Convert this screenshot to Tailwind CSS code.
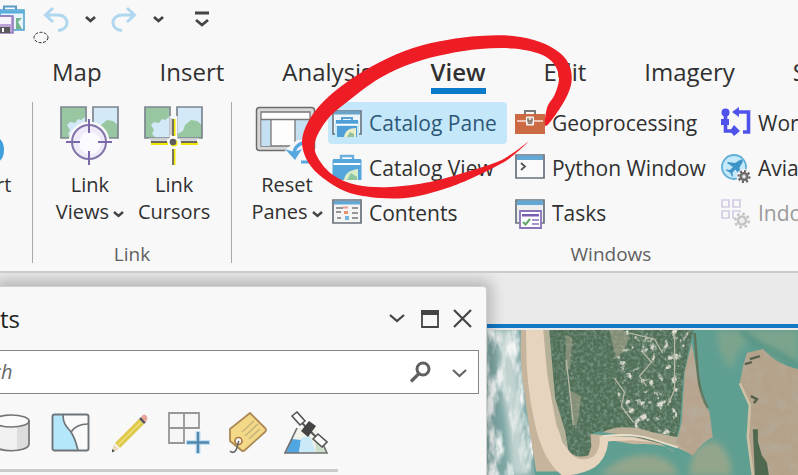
<!DOCTYPE html>
<html lang="en">
<head>
<meta charset="utf-8">
<meta name="viewport" content="width=device-width, initial-scale=1">
<title>Ribbon – View tab</title>
<script src="https://cdn.jsdelivr.net/npm/@tailwindcss/browser@4"></script>
</head>
<body class="relative flex h-screen flex-col overflow-hidden bg-[#f8f8f8] font-['Open_Sans','Noto_Sans',sans-serif] text-[#303030]">

<!-- Quick access toolbar -->
<header class="flex h-[55px] shrink-0 items-start pt-1">
  <button aria-label="Save project" class="shrink-0">
    <svg class="h-8 w-[25px]" viewBox="0 0 25 32" fill="none">
      <path d="M4 6V2.500h12V6" stroke="#5a9cc4" stroke-width="2"/>
      <path d="M0 6h24v20H10V12H0z" fill="#e6f3fa" stroke="#4a9fd0" stroke-width="1.500"/>
      <path d="M0 7h24v2.500H0z" fill="#5aaedc"/>
      <path d="M16 14h6l-4 4 4 7h-6z" fill="#74b48c"/>
      <path d="M-4 12h17v17H-4z" fill="#b9a6d6" stroke="#9277bd" stroke-width="1.500"/>
      <path d="M-2 13h13v7H-2z" fill="#f7f4fb"/>
      <path d="M0 23h10v6H0z" fill="#5a5a5a"/><path d="M2 24h2v4H2z" fill="#fff"/>
    </svg>
  </button>
  <button aria-label="Undo" class="ml-[18px] shrink-0">
    <svg class="h-8 w-[26px]" viewBox="0 0 26 32" fill="none" stroke="#b0d7ef" stroke-width="3"><path d="M10 4 2.500 11 10 18M3 11h12c5 0 9 3 9 7.500S20 26 15 26.500"/></svg>
  </button>
  <button aria-label="Undo list" class="ml-4 shrink-0">
    <svg class="h-8 w-3" viewBox="0 0 12 32" fill="none" stroke="#444" stroke-width="2.800"><path d="m1 13 4.500 4L10 13"/></svg>
  </button>
  <button aria-label="Redo" class="ml-[14px] shrink-0">
    <svg class="h-8 w-[26px]" viewBox="0 0 26 32" fill="none" stroke="#b0d7ef" stroke-width="3"><path d="m16 4 7.500 7L16 18M23 11H11c-5 0-9 3-9 7.500S6 26 11 26.500"/></svg>
  </button>
  <button aria-label="Redo list" class="ml-4 shrink-0">
    <svg class="h-8 w-3" viewBox="0 0 12 32" fill="none" stroke="#444" stroke-width="2.800"><path d="m1 13 4.500 4L10 13"/></svg>
  </button>
  <button aria-label="Customize toolbar" class="ml-[29px] shrink-0">
    <svg class="h-8 w-4" viewBox="0 0 16 32" fill="none" stroke="#444" stroke-width="2.800"><path d="M1 9h14M2 16l6 5 6-5"/></svg>
  </button>
</header>

<!-- Ribbon tabs -->
<nav class="flex shrink-0 gap-[58px] overflow-hidden whitespace-nowrap pl-[52px] text-[24px] leading-[33px]">
  <a href="#" class="border-b-[6px] border-transparent">Map</a>
  <a href="#" class="border-b-[6px] border-transparent">Insert</a>
  <a href="#" class="border-b-[6px] border-transparent">Analysis</a>
  <a href="#" aria-current="page" class="border-b-[6px] border-[#0a7acb] font-semibold">View</a>
  <a href="#" class="border-b-[6px] border-transparent">Edit</a>
  <a href="#" class="border-b-[6px] border-transparent">Imagery</a>
  <a href="#" class="border-b-[6px] border-transparent">Share</a>
</nav>

<!-- Ribbon -->
<main class="flex min-h-0 flex-1 flex-col">
<section aria-label="View ribbon" class="flex h-[179px] shrink-0 items-start overflow-hidden whitespace-nowrap border-b-2 border-[#cacbcb] pt-2">
  <div class="h-[161px] w-[33px] shrink-0 border-r border-[#a9a9a9]">
    <button class="-ml-1 flex flex-col items-start gap-[5px] pt-1 text-[20px] leading-[27px]">
      <svg class="h-[60px] w-3" viewBox="0 0 12 60"><path d="M0 31c5 1 8 6 8 13S5 55 0 57z" fill="#3fa0dc"/></svg>
      <span>rt</span>
    </button>
  </div>

  <div class="flex h-[161px] w-[199px] shrink-0 flex-col border-r border-[#a9a9a9]">
    <div class="flex h-[140px] shrink-0 items-start justify-center gap-[14px] pl-[2px]">
      <button class="flex flex-col items-center gap-[5px] pt-1 text-[20px] leading-[27px]">
        <svg class="h-[60px] w-[60px]" viewBox="0 0 60 60" fill="none">
          <path d="M1 1h25v31H1zM33 1h25v31H33z" fill="#d3e9f7"/>
          <path d="M1 1h24v10l-4 3-3-1-3 4-5-1-3 3 3 5-2 4 4 4H1zM33 32V28l6-3 2-6 6-5 6 1 5 4v13z" fill="#98c6a0"/>
          <path d="M1 1h25v31H1zM33 1h25v31H33z" stroke="#7c8590" stroke-width="1.700"/>
          <circle cx="29" cy="36" r="20.500" fill="#f8f8f8"/>
          <circle cx="29" cy="36" r="17" fill="#efebf8" stroke="#8274a8" stroke-width="2"/>
          <circle cx="30" cy="37" r="11" fill="#fbfaff"/>
          <path d="M29 13v14M29 45v14M6 36h14M38 36h14" stroke="#7a68ab" stroke-width="2"/>
        </svg>
        <span>Link<br>Views<svg class="ml-1 inline h-3 w-[11px]" viewBox="0 0 11 12" fill="none" stroke="#444" stroke-width="2.400"><path d="m1 4 4.500 4L10 4"/></svg></span>
      </button>
      <button class="flex flex-col items-center gap-[5px] pt-1 text-[20px] leading-[27px]">
        <svg class="h-[60px] w-[60px]" viewBox="0 0 60 60" fill="none">
          <path d="M1 1h25v31H1zM33 1h25v31H33z" fill="#d3e9f7"/>
          <path d="M1 1h24v10l-4 3-3-1-3 4-5-1-3 3 3 5-2 4 4 4H1zM33 32V28l6-3 2-6 6-5 6 1 5 4v13z" fill="#98c6a0"/>
          <path d="M1 1h25v31H1zM33 1h25v31H33z" stroke="#7c8590" stroke-width="1.700"/>
          <path d="M29.500 10v50M5 36.500h50" stroke="#f8f8f8" stroke-width="8"/>
          <path d="M27 12v17M6 33.500h17M36 33.500h17" stroke="#cfcfcf" stroke-width="2.500"/>
          <path d="M30 13v17M30 43v16M7 37.500h17M37 37.500h17" stroke="#f2e600" stroke-width="3"/>
          <path d="M29 13v17M29 43v16M7 36h16M37 36h16" stroke="#6a6a60" stroke-width="1.800"/>
          <circle cx="30" cy="37" r="3.500" fill="#f2e600"/><circle cx="29" cy="36" r="3.300" fill="#5c5c5c"/>
        </svg>
        <span>Link<br>Cursors</span>
      </button>
    </div>
    <p class="text-center text-[19px] leading-6 text-[#606060]">Link</p>
  </div>

  <div class="flex w-[758px] shrink-0 flex-col">
    <div class="flex h-[140px] shrink-0 items-start pl-[18px]">
      <button class="flex w-[74px] flex-col items-center gap-[5px] pt-1 text-[20px] leading-[27px]">
        <svg class="h-[60px] w-[64px]" viewBox="0 0 64 60" fill="none">
          <rect x="1.500" y="1.500" width="58" height="43" rx="3" fill="#d8d8d8" stroke="#6b6b6b" stroke-width="1.500"/>
          <path d="M6 6h49v34H6z" fill="#fdfdfd" stroke="#777" stroke-width="1.300"/>
          <path d="M6.500 14H16v26H6.500zM40 14h14.500v26H40z" fill="#c4dff1"/>
          <path d="M6 13.500h49M16 14v26M40 14v26" stroke="#777" stroke-width="1.300"/>
          <path d="M30 44c4 10 14 12 14 12s10-4 14-22H42z" fill="#f8f8f8"/>
          <path d="M39 48c0-7 6-12 15-12" stroke="#57a7e0" stroke-width="3.500"/><path d="m30 43 9 3 8-3-7 11z" fill="#57a7e0"/>
          <path d="M46 56h14" stroke="#57a7e0" stroke-width="3"/>
        </svg>
        <span>Reset<br>Panes<svg class="ml-1 inline h-3 w-[11px]" viewBox="0 0 11 12" fill="none" stroke="#444" stroke-width="2.400"><path d="m1 4 4.500 4L10 4"/></svg></span>
      </button>

      <div class="ml-1 flex w-[179px] flex-col gap-[3px] text-[21px]">
        <button class="flex h-[42px] items-center gap-[7px] rounded bg-[#c4e7fa] px-1 pt-[2px] text-[#2d5878]">
          <svg class="h-[30px] w-[30px] shrink-0" viewBox="0 0 30 30" fill="none">
            <path d="M1 2h28v23H1z" fill="#eef5fa" stroke="#68727c" stroke-width="1.600"/><path d="M1.800 2h26.400v3.500H1.800z" fill="#6aa3c8"/>
            <path d="M3 12h24v17H3z" fill="#c4e7fa"/>
            <path d="M10 12V9h10v3" stroke="#54a2d8" stroke-width="2"/>
            <path d="M4 11h22v4H4zM5 17h20v11H5z" fill="#4fa0d8"/><path d="M4 15.500h22" stroke="#fff" stroke-width="1.500"/>
            <path d="M12 28c1-6 5-9 12-9v9z" fill="#e9edc8"/><path d="M15 28l3-5 4 2v3z" fill="#94c19a"/>
          </svg>Catalog Pane
        </button>
        <button class="flex h-[42px] items-center gap-[7px] px-1 pt-[2px]">
          <svg class="h-[30px] w-[30px] shrink-0" viewBox="0 0 30 30" fill="none">
            <path d="M9 6V2h12v4" stroke="#6bb0dd" stroke-width="2.400"/>
            <path d="M1 5h28v4H1zM1 11h28v15H1z" fill="#55a6dc"/><path d="M1 6v20M29 6v20" stroke="#55a6dc"/><path d="M2 10h26" stroke="#fff" stroke-width="2"/>
            <path d="M12 26c1-7 6-10 14-11v11z" fill="#d9edc8"/><path d="m15 26 4-7 6 4v3z" fill="#8fc6a0"/>
          </svg>Catalog View
        </button>
        <button class="flex h-[42px] items-center gap-[7px] px-1 pt-[2px]">
          <svg class="h-[30px] w-[30px] shrink-0" viewBox="0 0 30 30" fill="none">
            <path d="M1 1h28v23H1z" fill="#f4f4f4" stroke="#68727c" stroke-width="1.700"/><path d="M2 2h26v3.500H2z" fill="#63a8d4"/>
            <path d="M4 9h7M4 13h5M5 19h4M20 9h6M20 14h6M20 19h6" stroke="#777" stroke-width="1.600"/>
            <path d="M11 8.500h5" stroke="#e9a090" stroke-width="2"/><path d="M12 12h4v3h-4z" fill="#e8916c"/><path d="M13 17h4v4h-4z" fill="#77b5dc"/>
          </svg>Contents
        </button>
      </div>

      <div class="ml-1 flex w-[202px] flex-col gap-[3px] text-[21px]">
        <button class="flex h-[42px] items-center gap-[7px] px-1 pt-[2px]">
          <svg class="h-[30px] w-[30px] shrink-0" viewBox="0 0 30 30" fill="none">
            <path d="M10 6V2h10v4" stroke="#7b7b7b" stroke-width="2"/><path d="M0 5h30v20H0z" fill="#cc6a43"/>
            <path d="M2 12h26" stroke="#f8ddd0" stroke-width="1.600"/><path d="M11.500 8h7v8h-7z" fill="#e8d5cb" stroke="#fff"/><path d="M13 9v3h4V9M13 14h4" stroke="#7b6a62" stroke-width="1.300"/>
          </svg>Geoprocessing
        </button>
        <button class="flex h-[42px] items-center gap-[7px] px-1 pt-[2px]">
          <svg class="h-[30px] w-[30px] shrink-0" viewBox="0 0 30 30" fill="none">
            <path d="M1 1h28v23H1z" fill="#fafafa" stroke="#68727c" stroke-width="1.700"/><path d="M2 1.500h26V6H2z" fill="#63a8d4"/><path d="m6 9 4 3.500L6 16" stroke="#555" stroke-width="1.800"/>
          </svg>Python Window
        </button>
        <button class="flex h-[42px] items-center gap-[7px] px-1 pt-[2px]">
          <svg class="h-[30px] w-[30px] shrink-0" viewBox="0 0 30 30" fill="none">
            <path d="M1 1h28v23H1z" fill="#eee" stroke="#68727c" stroke-width="1.700"/><path d="M2 1.500h26V6H2z" fill="#63a8d4"/>
            <path d="M5 12h21v17H5z" fill="#fcfbff" stroke="#8a74b8" stroke-width="1.800"/><path d="M7 15h17v2.500H7z" fill="#7a5fb0"/><path d="m8 23 2.500 2.500L15 20" stroke="#62a86a" stroke-width="2"/><path d="M17 21h7M17 25h7" stroke="#8a74b8" stroke-width="1.700"/>
          </svg>Tasks
        </button>
      </div>

      <div class="ml-1 flex flex-col gap-[3px] text-[21px]">
        <button class="flex h-[42px] items-center gap-[7px] px-1 pt-[2px]">
          <svg class="h-[30px] w-[30px] shrink-0 overflow-visible" viewBox="0 0 30 30" fill="none">
            <circle cx="4.500" cy="3.500" r="4" fill="#4f52ea"/><path d="M0 10h8v6H0z" fill="#4f52ea"/><path d="M4.500 3v19H14" stroke="#4f52ea" stroke-width="3.600"/><path d="m13 16 6 6-6 5-4-5z" fill="#4f52ea"/>
            <path d="M16 3h11.500v20H22" stroke="#4f52ea" stroke-width="3.600"/><path d="M18-2v10l-7-5z" fill="#4f52ea"/>
          </svg>Workflow Manager
        </button>
        <button class="flex h-[42px] items-center gap-[7px] px-1 pt-[2px]">
          <svg class="h-[30px] w-[30px] shrink-0" viewBox="0 0 30 30" fill="none">
            <circle cx="13" cy="13" r="12" fill="#c5e9f8" stroke="#5eb0d8" stroke-width="1.800"/>
            <path d="m19 6-5 3-7-1-1 1 6 4-3 3-4-.5v1l4 2 2 4h1l-.5-4 3-3 4 6 1-1-1-7 3-5q1-3-2-3z" fill="#3e94c6"/>
            <circle cx="23" cy="22.500" r="7.500" fill="#f8f8f8"/><circle cx="23" cy="22.500" r="5.500" stroke="#666" stroke-width="2.200" stroke-dasharray="2.200 2"/><circle cx="23" cy="22.500" r="3.500" fill="#aaa" stroke="#666" stroke-width="2"/><circle cx="23" cy="22.500" r="1.200" fill="#fff"/>
          </svg>Aviation Charting
        </button>
        <button disabled class="flex h-[42px] items-center gap-[7px] px-1 pt-[2px] text-[#9b9b9b]">
          <svg class="h-[30px] w-[30px] shrink-0" viewBox="0 0 30 30" fill="none">
            <path d="M1 1h7v7H1zM12 1h7v7h-7zM1 12h7v7H1zM12 12h7v7h-7z" stroke="#d3cce4" stroke-width="1.700"/>
            <circle cx="21" cy="21.500" r="8.500" fill="#f8f8f8"/><circle cx="21" cy="21.500" r="6.800" stroke="#c4c4c4" stroke-width="2.500" stroke-dasharray="2.700 2.640"/><circle cx="21" cy="21.500" r="4" fill="#eee" stroke="#c4c4c4" stroke-width="2.500"/>
          </svg>Indoors
        </button>
      </div>
    </div>
    <p class="text-center text-[19px] leading-6 text-[#606060]">Windows</p>
  </div>
</section>

<!-- Workspace -->
<div class="flex min-h-0 flex-1 items-stretch overflow-hidden bg-[#eaeaea]">
  <aside aria-label="Contents pane" class="relative mt-[13px] flex w-[487px] shrink-0 flex-col rounded-tr border-r border-t border-[#cfcfcf] bg-[#f8f8f8] shadow-[0_-1px_14px_5px_rgba(0,0,0,0.22)]">
    <div class="flex h-[63px] items-center pr-[14px]">
      <h2 class="flex-1 text-[24px] leading-8 text-[#222]">ts</h2>
      <button aria-label="Pane options"><svg class="h-5 w-4" viewBox="0 0 16 20" fill="none" stroke="#444" stroke-width="2.300"><path d="m1 6 7 6 7-6"/></svg></button>
      <button aria-label="Maximize" class="ml-4"><svg class="h-5 w-[18px]" viewBox="0 0 18 20" fill="none"><path d="M1 2h16v16H1z" stroke="#444" stroke-width="1.800"/><path d="M0 1h18v5H0z" fill="#444"/></svg></button>
      <button aria-label="Close" class="ml-[14px]"><svg class="h-5 w-[19px]" viewBox="0 0 19 20" fill="none" stroke="#444" stroke-width="2.200"><path d="m1 1 17 17M18 1 1 18"/></svg></button>
    </div>
    <div class="mr-[7px] flex h-11 shrink-0 items-center border-y border-r border-[#868686] bg-white pr-[11px]">
      <input type="text" aria-label="Search" placeholder="ch" class="-ml-2 min-w-0 flex-1 bg-transparent text-[20px] italic leading-7 outline-none placeholder:text-[#666]">
      <button aria-label="Run search"><svg class="h-6 w-[22px]" viewBox="0 0 22 24" fill="none" stroke="#606060"><circle cx="14" cy="9" r="6" stroke-width="3"/><path d="m10 13.500-8 8" stroke-width="3.200"/></svg></button>
      <button aria-label="Search options" class="ml-[21px]"><svg class="h-6 w-[15px]" viewBox="0 0 15 24" fill="none" stroke="#666" stroke-width="2.200"><path d="m1 10 6.500 6 6.500-6"/></svg></button>
    </div>
    <div class="mt-[17px] flex h-[45px] shrink-0 items-start">
      <button aria-label="List by data source"><svg class="h-[45px] w-[30px]" viewBox="0 0 30 45" fill="none"><path d="M-6 9v24c0 9 35 9 35 0V9z" fill="#f0f0f0"/><path d="M17 14v25c8-1 12-3 12-6V9z" fill="#dcdcdc"/><path d="M-6 9v24c0 9 35 9 35 0V9" stroke="#747474" stroke-width="1.700"/><ellipse cx="11.500" cy="10" rx="17.500" ry="6" fill="#fafafa" stroke="#747474" stroke-width="1.700"/></svg></button>
      <button aria-label="List by selection" class="ml-[21px]"><svg class="h-[45px] w-[39px]" viewBox="0 0 39 45" fill="none"><rect x="1.500" y="3.500" width="36" height="36" rx="2" fill="#fafafa"/><path d="M2 4h10c0 9 4 12 8 17 4 6 5 11 7 18H2z" fill="#b4e7fa"/><path d="M12 4c0 9 4 12 8 17 4 6 5 11 7 18M20 21c4-6 9-8 17-8" stroke="#6e7478" stroke-width="1.700"/><rect x="1.500" y="3.500" width="36" height="36" rx="2" stroke="#6e7478" stroke-width="1.900"/></svg></button>
      <button aria-label="List by editing" class="ml-[21px]"><svg class="h-[45px] w-[38px]" viewBox="0 0 38 45"><path d="m3 33 5 5-6 3-1-1z" fill="#eadbc0"/><path d="m1 38 3 2-3 1.500z" fill="#555"/><path d="M4 32 28 8l5 5L9 37z" fill="#dfc94d"/><path d="M7 34 31 10" stroke="#f0e07a" stroke-width="1.500"/><path d="m28 8 2-2 5 5-2 2z" fill="#565656"/><path d="m30 6 2-2c3-1 5 2 4 5l-2 2z" fill="#e8a398"/></svg></button>
      <button aria-label="List by snapping" class="ml-[18px]"><svg class="h-[45px] w-11" viewBox="0 0 44 45" fill="none"><path d="M2 2h30v15H2zM2 2h15v30H2z" fill="#f6f6f6" stroke="#969696" stroke-width="1.800"/><path d="M31 20v23M19 31.500h24" stroke="#bde0f5" stroke-width="5"/><path d="M31 21v21M20 31.500h22" stroke="#5587ad" stroke-width="2.400"/></svg></button>
      <button aria-label="List by labeling" class="ml-4"><svg class="h-[45px] w-10" viewBox="0 0 40 45" fill="none"><path d="M23 2 38 17Q40 19 38 21L18 39Q16 41 14 39L3 30V18z" fill="#f3d987" stroke="#ad8a55" stroke-width="1.800"/><path d="m15 21 12-11M18 25 31 13M22 28l11-10" stroke="#c6b67e" stroke-width="1.600"/><circle cx="11.500" cy="30" r="3.500" fill="#fff" stroke="#a87848" stroke-width="1.700"/><path d="M12 30c-2 3-1 9-5 11-2 1-3 0-4-1" stroke="#666" stroke-width="1.600"/></svg></button>
      <button aria-label="List by imagery" class="ml-[17px]"><svg class="h-[45px] w-11" viewBox="0 0 44 45" fill="none"><path d="M13 17h18l12 25H1z" fill="#f1f3ea"/><path d="m8 28 9 1-2 13H2z" fill="#4fa6e0"/><path d="m17 27 9-2 6 17H15z" fill="#c9e8f8"/><path d="m31 29 7 4 4 9H32z" fill="#cddfc8"/><path d="m13 17-12 25h42l-5-11" stroke="#707070" stroke-width="1.700"/><path d="m13 7 19 19" stroke="#555" stroke-width="2"/><path d="m8 5 5-4 8 9-5 4zM29 28l5-5 9 8-5 5z" fill="#fafafa" stroke="#555" stroke-width="1.600"/><path d="m17 20 8-10 7 5-8 11z" fill="#444"/></svg></button>
    </div>
    <div class="mt-[13px] h-[3px] w-[338px] shrink-0 bg-[#cbcbcb]"></div>
  </aside>

  <div class="flex min-w-0 flex-1 flex-col pt-[51px]">
    <div class="min-h-0 flex-1 border-t-4 border-[#1179c6] pt-[2px]">
      <svg role="img" aria-label="Aerial imagery of a coastal inlet" class="h-full w-full" viewBox="0 0 310 145" preserveAspectRatio="xMinYMin slice">
        <defs>
          <filter id="trees" x="0" y="0" width="100%" height="100%"><feTurbulence type="fractalNoise" baseFrequency=".3" numOctaves="3" seed="4"/><feColorMatrix values="0 0 0 0 .2  0 0 0 0 .31  0 0 0 0 .25  2.200 0 0 0 -.9"/><feComposite in2="SourceGraphic" operator="in"/></filter>
          <filter id="clear" x="0" y="0" width="100%" height="100%"><feTurbulence type="fractalNoise" baseFrequency=".13" numOctaves="4" seed="9"/><feColorMatrix values="0 0 0 0 .72  0 0 0 0 .71  0 0 0 0 .63  6 0 0 0 -3.500"/><feComposite in2="SourceGraphic" operator="in"/></filter>
          <filter id="surf" x="0" y="0" width="100%" height="100%"><feTurbulence type="fractalNoise" baseFrequency=".08 .03" numOctaves="4" seed="7"/><feColorMatrix values="0 0 0 0 .91  0 0 0 0 .94  0 0 0 0 .94  4 0 0 0 -1.800"/><feComposite in2="SourceGraphic" operator="in"/></filter>
          <filter id="grain" x="0" y="0" width="100%" height="100%"><feTurbulence type="fractalNoise" baseFrequency=".08" numOctaves="4" seed="2"/><feColorMatrix values="0 0 0 0 .45  0 0 0 0 .45  0 0 0 0 .38  1.200 0 0 0 -.5"/><feComposite in2="SourceGraphic" operator="in"/></filter>
          <filter id="soft" x="-20%" y="-20%" width="140%" height="140%"><feGaussianBlur stdDeviation="3"/></filter>
        </defs>
        <path d="M0 0h310v145H0z" fill="#5f9f92"/>
        <path d="M230 0h80v35q-30-5-45-25Q250 15 244 40 226 20 230 0z" fill="#7ba48d" filter="url(#soft)"/>
        <path d="M253 0q15 16 34 22l23 14" fill="none" stroke="#4b9184" stroke-width="5" filter="url(#soft)"/>
        <path d="M112 145q25-24 55-20 20 5 24 20zM206 120q20-14 26-6 12 12 12 31h-43z" fill="#93a68b" filter="url(#soft)"/>
        <path d="M0 0h36l4 60 8 85H0z" fill="#7fa8a5"/>
        <path d="M0 0h36l4 60 8 85H0z" filter="url(#surf)"/>
        <path d="M10 0h16l6 50 4 50 7 45H24q-2-50-8-75z" fill="#edf0ee" opacity=".6" filter="url(#soft)"/>
        <path d="M34 0h30l14 90 27 14 60 4 22 14q-10-10-40-8l-30-5q-6 14-16 22-14 10-24 10H49Q42 100 37 60q-5-30-3-60z" fill="#c7b49c"/>
        <path d="M39 0h17l4 45 9 50 12 25q10 14 25 6 8-8 6-20l32 1 23 5-22-2-24 1q-2 18-14 26-14 8-32 8Q55 130 47 90 38 50 39 0z" fill="#e6d4be"/>
        <path d="M57 0h10l2 60 12 40 4 24-10-12Q60 60 57 0z" fill="#b5b098"/>
        <path d="M62 0h144l-4 15-6 30-4 50-4 16-16 2-30-8-30-4-9 3 1 12-3 9q-14 4-20-6l-3-18-10-33z" fill="#506f56"/>
        <path d="M62 0h144l-4 15-6 30-4 50-4 16-16 2-30-8-30-4-9 3 1 12-3 9q-14 4-20-6l-3-18-10-33z" filter="url(#trees)"/>
        <path d="m127 0h75v15l-10 30-4 62-40-4-16-30-6-30z" filter="url(#clear)"/>
        <path d="M122 0h14l6 8q-6 16-13 20l-4-14zM79 5l6 3-2 28-5 6zM82 60l12 6-5 32-4-10z" fill="#a6a48c" opacity=".6"/>
        <path d="m79 30 4 35 3 30M187 3v56q-3 8-7 16M127 48l10 14-3 14 12 16M142 3l25 6 8 14M155 22l9 10-12 14 7 10" fill="none" stroke="#b9b9a6" stroke-width="1.300"/>
        <path d="M115 102q20-10 50 0l25 5 10 15-18-8-30-8z" fill="#bcb099"/>
        <path d="M115 106q30-4 50 3l25 8" fill="none" stroke="#eadfcb" stroke-width="2"/>
        <path d="m204 13 4 22 3 20 11 28 3 24q-10 4-20 18-10-5-16-13l5-20 3-50z" fill="#b8a48e"/>
        <path d="m207 3 3 40q2 20 10 35" fill="none" stroke="#5e755c" stroke-width="2.500"/>
        <path d="M275 19q14 16 35 20v106h-44l-6-38 2-32-10-22 3-16 4-14z" fill="#b5a28a"/>
        <path d="M275 19q14 16 35 20v106h-44l-6-38 2-32-10-22 3-16 4-14z" filter="url(#grain)"/>
        <path d="m204 13 4 22 3 20 11 28 3 24q-10 4-20 18-10-5-16-13l5-20 3-50z" filter="url(#grain)"/>
        <path d="m252 53 10 22-2 32 5 38" fill="none" stroke="#cec1a5" stroke-width="2.500"/>
        <path d="M265 99h5v12l4 14 5 7 2 13h-14z" fill="#4e6950"/>
        <path d="m257 34 7-2M262 29l10-3M263 66l6 3-3 4" fill="none" stroke="#57614e" stroke-width="2.500"/>
      </svg>
    </div>
  </div>
</div>
</main>

<!-- Busy pointer and hand-drawn highlight, lying over the window -->
<svg aria-hidden="true" class="pointer-events-none absolute left-0 top-0 h-[210px] w-[600px]" viewBox="0 0 600 210" fill="none">
  <ellipse cx="41" cy="37.500" rx="7" ry="5.200" stroke="#222" stroke-dasharray="3 1.500"/>
  <path id="marker" fill="#ee1c25"/>
</svg>
<script>
  // Marker outline: outer edge from the lower tail round to the top end, then the inner edge back.
  const outline = [[528,142],[510,158],[493,168],[470,179],[447,188],[413,197],[380,198],[347,192],[323,178],[308,162],[302,142],[308,122],[323,102],[347,82],[380,62],[413,48],[447,40],[480,36],[513,36],[540,42],[560,53],[570,67],[571,85],[562,105],[546,126],[547,108],[555,94],[559,78],[554,64],[540,54],[513,48.500],[480,49],[447,54],[413,63],[380,78],[347,102],[327,120],[315,142],[318,158],[333,175],[357,185],[390,187],[430,182],[463,173],[497,162],[513,153]];
  const n = outline.length, at = i => outline[(i + n) % n];
  let d = "M" + outline[0];
  for (let i = 0; i < n; i++) {
    const [a, b, c, e] = [at(i - 1), at(i), at(i + 1), at(i + 2)];
    d += `C${b[0] + (c[0] - a[0]) / 6},${b[1] + (c[1] - a[1]) / 6} ${c[0] - (e[0] - b[0]) / 6},${c[1] - (e[1] - b[1]) / 6} ${c}`;
  }
  document.getElementById("marker").setAttribute("d", d);
</script>
</body>
</html>
